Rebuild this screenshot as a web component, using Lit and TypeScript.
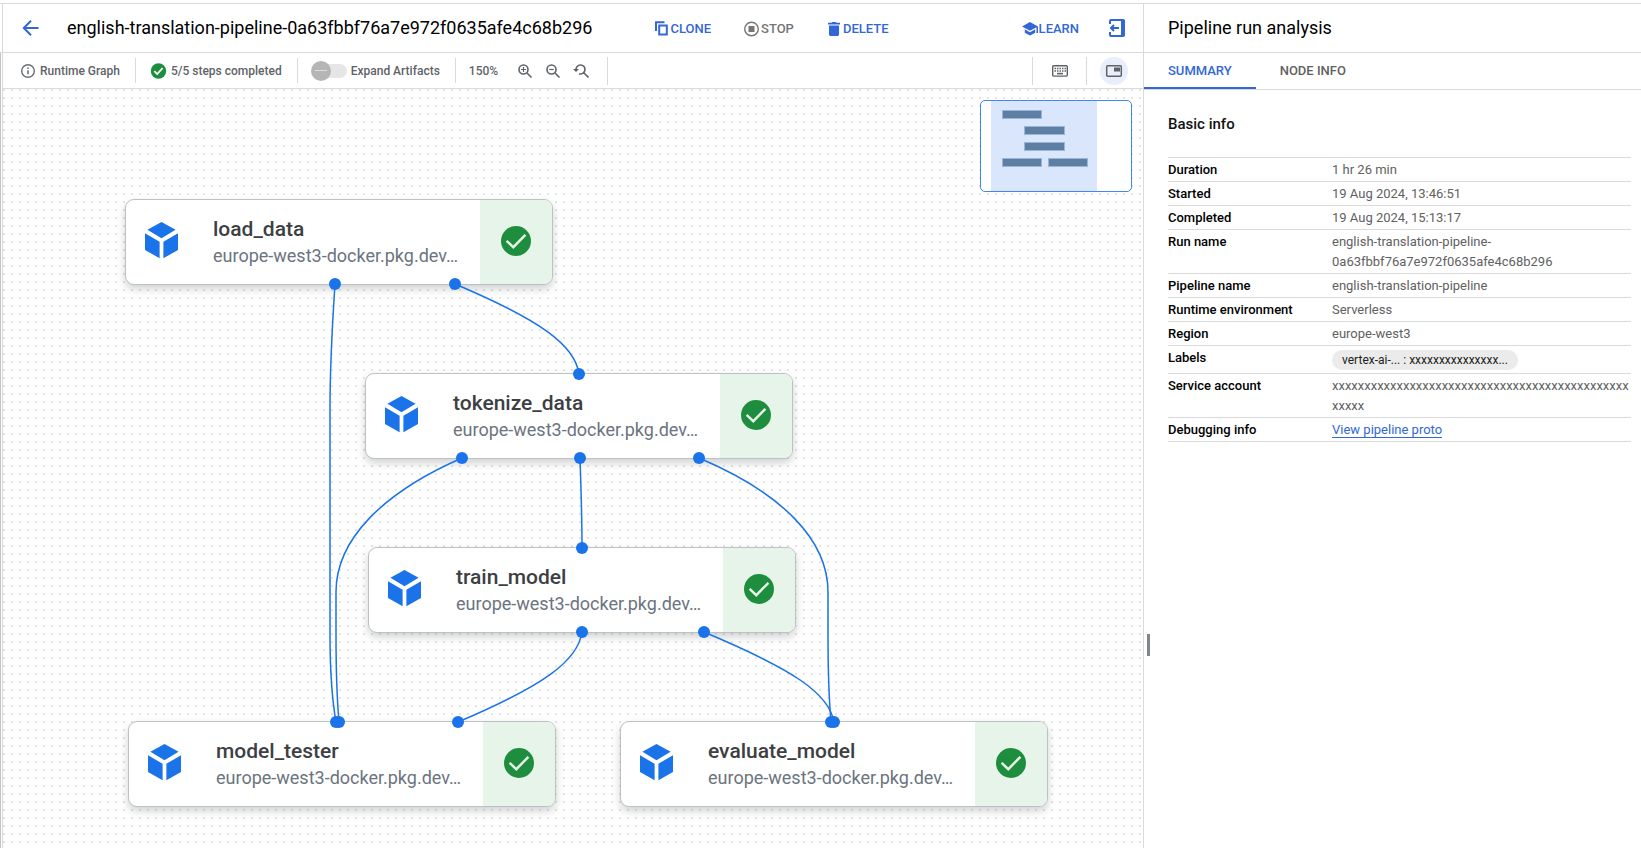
import { LitElement, html, svg, css, nothing } from "lit";
import { customElement, property, state } from "lit/decorators.js";
import { classMap } from "lit/directives/class-map.js";

interface GraphNode {
  name: string;
  image: string;
  x: number;
  y: number;
}

const IMAGE = "europe-west3-docker.pkg.dev…";

const NODES: GraphNode[] = [
  { name: "load_data", image: IMAGE, x: 122, y: 110 },
  { name: "tokenize_data", image: IMAGE, x: 362, y: 284 },
  { name: "train_model", image: IMAGE, x: 365, y: 458 },
  { name: "model_tester", image: IMAGE, x: 125, y: 632 },
  { name: "evaluate_model", image: IMAGE, x: 617, y: 632 },
];

const EDGES = [
  "M332 195C329 240 327 270 327 320V545C327 585 329 610 333 633",
  "M452 195C537 231 572 256 576 285",
  "M459 369C379 404 333 451 333 503V545C333 585 334 610 336 633",
  "M577 369C578 400 579 425 579 459",
  "M696 369C779 404 825 451 825 503V545C825 585 826 610 828 633",
  "M579 543C575 572 540 597 455 633",
  "M701 543C789 580 826 604 831 633",
];

const PORTS = [
  [332, 195], [452, 195], [576, 285], [459, 369], [577, 369], [696, 369],
  [579, 459], [579, 543], [701, 543], [333, 633], [336, 633], [455, 633],
  [828, 633], [831, 633],
];

@customElement("graph-node")
class GraphNodeCard extends LitElement {
  @property() name = "";
  @property() image = "";

  static styles = css`
    :host {
      display: flex;
      box-sizing: border-box;
      width: 428px;
      height: 86px;
      border: 1px solid #bac2c4;
      border-radius: 9px;
      overflow: hidden;
      background: #fff;
      box-shadow: 0 4px 9px rgba(60, 64, 67, 0.24);
    }
    .kind {
      display: flex;
      align-items: center;
      padding: 0 34px 4px 18px;
    }
    .text {
      flex: 1;
      min-width: 0;
      padding-top: 16px;
    }
    .name {
      font-size: 21px;
      line-height: 27px;
      font-weight: 500;
      color: #3c4043;
    }
    .image {
      font-size: 18px;
      line-height: 25px;
      color: #6b7480;
      white-space: nowrap;
    }
    .status {
      display: flex;
      align-items: center;
      justify-content: center;
      width: 72px;
      padding-bottom: 2px;
      box-sizing: border-box;
      background: #e6f4ea;
    }
    svg {
      display: block;
    }
  `;

  render() {
    return html`
      <div class="kind">
        <svg width="35" height="38" viewBox="0 0 35 38" fill="#1a73e8">
          <path d="M17.5 1 31.6 8.8 17.5 17.2 3.4 8.8z" />
          <path d="M1 12.2 15.6 20.8V37.2L1 29z" />
          <path d="M34 12.2 19.4 20.8V37.2L34 29z" />
        </svg>
      </div>
      <div class="text">
        <div class="name">${this.name}</div>
        <div class="image">${this.image}</div>
      </div>
      <div class="status">
        <svg width="30" height="30" viewBox="0 0 30 30" role="img" aria-label="Succeeded">
          <circle cx="15" cy="15" r="15" fill="#1e8e3e" />
          <path d="M5.6 14.8 12.3 21.2 24.4 8.8" fill="none" stroke="#e6f4ea" stroke-width="2.4" />
        </svg>
      </div>
    `;
  }
}

@customElement("app-root")
class AppRoot extends LitElement {
  @state() private tab = "summary";
  @state() private mapShown = true;

  static styles = css`
    :host {
      display: flex;
      box-sizing: border-box;
      height: 100vh;
      padding-top: 3px;
      overflow: hidden;
      background: #fff;
      font-family: Roboto, "Liberation Sans", sans-serif;
      font-size: 13px;
      color: #111;
    }
    button {
      border: 0;
      padding: 0;
      background: none;
      font: inherit;
      color: inherit;
      cursor: pointer;
    }
    svg {
      display: block;
      flex: none;
    }
    .rail {
      flex: none;
      width: 2px;
      display: flex;
      flex-direction: column;
    }
    .rail-head {
      height: 48px;
      border-top: 1px solid #dadada;
      border-bottom: 1px solid #dadada;
    }
    .rail-body {
      flex: 1;
      width: 1px;
      background: #c4c4c6;
    }
    .main {
      flex: 1;
      min-width: 0;
      display: flex;
      flex-direction: column;
      border-left: 1px solid #dadada;
    }
    .header {
      flex: none;
      display: flex;
      align-items: center;
      height: 48px;
      border-top: 1px solid #dadada;
      border-bottom: 1px solid #dadada;
    }
    .main .header {
      padding: 0 18px 0 19px;
    }
    .title {
      margin: 0;
      font-size: 18px;
      line-height: 24px;
      font-weight: 400;
      white-space: nowrap;
      color: #000;
    }
    .back {
      margin-right: 28px;
    }
    .actions {
      display: flex;
      gap: 33px;
      margin-left: 63px;
    }
    .action {
      display: flex;
      align-items: center;
      gap: 2px;
      padding-top: 1px;
      font-weight: 500;
      line-height: 20px;
      color: #3367d6;
    }
    .action:disabled {
      color: #757575;
      cursor: default;
    }
    .tools {
      display: flex;
      align-items: center;
      gap: 30px;
      margin-left: auto;
      color: #3367d6;
    }
    .tools .action {
      gap: 0;
    }
    .toolbar {
      flex: none;
      display: flex;
      align-items: center;
      height: 35px;
      border-bottom: 1px solid #dadada;
      padding: 0 15px 0 17px;
      font-size: 12px;
      font-weight: 500;
      color: #5f6368;
      white-space: nowrap;
    }
    .cell {
      display: flex;
      align-items: center;
      gap: 4px;
      height: 25px;
      border-right: 1px solid #dadada;
      padding-right: 15px;
      margin-right: 13px;
    }
    .cell.tall {
      height: 28px;
      padding-right: 18px;
    }
    .zooms {
      display: flex;
      gap: 12px;
      margin-left: 15px;
    }
    .views {
      display: flex;
      align-items: center;
      margin-left: auto;
    }
    .views .cell.tall {
      border-left: 1px solid #dadada;
      padding: 0 17px 0 18px;
    }
    .map-toggle {
      display: flex;
      align-items: center;
      justify-content: center;
      width: 28px;
      height: 28px;
      border-radius: 50%;
    }
    .map-toggle.on {
      background: #e8eefb;
    }
    .switch {
      appearance: none;
      position: relative;
      flex: none;
      width: 36px;
      height: 20px;
      margin: 0;
    }
    .switch::before {
      content: "";
      position: absolute;
      left: 4px;
      top: 3px;
      width: 32px;
      height: 14px;
      border-radius: 7px;
      background: #e6e6e6;
    }
    .switch::after {
      content: "";
      position: absolute;
      left: 0;
      top: 0;
      width: 20px;
      height: 20px;
      border-radius: 50%;
      background: linear-gradient(#dedede, #dedede) center / 12px 1px no-repeat #b5b5b5;
    }
    .canvas {
      flex: 1;
      min-height: 0;
      position: relative;
      overflow: hidden;
      background: conic-gradient(from 270deg at 2px 2px, #e4e4e4 90deg, transparent 0) 0 0 / 8px 8px;
    }
    .node {
      position: absolute;
    }
    .edges {
      position: absolute;
      inset: 0;
      width: 100%;
      height: 100%;
      pointer-events: none;
    }
    .minimap {
      position: absolute;
      top: 11px;
      right: 11px;
      box-sizing: border-box;
      width: 152px;
      height: 92px;
      border: 1px solid #4285f4;
      border-radius: 5px;
      background: #fff;
      overflow: hidden;
    }
    .panel {
      flex: none;
      position: relative;
      box-sizing: border-box;
      width: 498px;
      border-left: 1px solid #dadada;
      background: #fff;
    }
    .panel .header {
      padding: 0 24px;
    }
    .tabs {
      display: flex;
      height: 36px;
      border-bottom: 1px solid #dadada;
    }
    .tab {
      box-sizing: border-box;
      height: 36px;
      padding: 0 24px;
      border-bottom: 2px solid transparent;
      font-weight: 500;
      color: #616161;
    }
    .tab.on {
      color: #3367d6;
      border-color: #3367d6;
    }
    .info {
      padding: 24px 10px 0 24px;
    }
    .info h2 {
      margin: 0 0 23px;
      font-size: 15px;
      line-height: 20px;
      font-weight: 500;
      color: #111;
    }
    table {
      width: 100%;
      table-layout: fixed;
      border-spacing: 0;
      border-top: 1px solid #dadada;
      line-height: 20px;
    }
    th,
    td {
      padding: 2px 0 1px;
      border-bottom: 1px solid #dadada;
      vertical-align: top;
      text-align: left;
    }
    th {
      width: 164px;
      font-weight: 500;
      color: #000;
    }
    td {
      color: #616161;
      overflow-wrap: anywhere;
    }
    .chip {
      width: fit-content;
      margin: 2px 0;
      padding: 0 10px;
      border-radius: 10px;
      background: #ebebeb;
      font-size: 12px;
      color: #212121;
    }
    .link {
      color: #3367d6;
      text-decoration: none;
      border-bottom: 1px solid #3367d6;
    }
    .grip {
      position: absolute;
      left: 3px;
      bottom: 192px;
      width: 3px;
      height: 22px;
      background: #80868b;
    }
  `;

  private renderHeader() {
    return html`
      <header class="header">
        <button class="back" aria-label="Back">
          <svg width="17" height="16" viewBox="0 0 17 16" fill="none" stroke="#3367d6" stroke-width="2">
            <path d="M16.5 8H2M9 .8 1.8 8 9 15.2" />
          </svg>
        </button>
        <h1 class="title">english-translation-pipeline-0a63fbbf76a7e972f0635afe4c68b296</h1>
        <div class="actions">
          <button class="action">
            <svg width="13" height="15" viewBox="0 0 13 15" fill="none" stroke="#3367d6" stroke-width="2">
              <path d="M1 10V1.2H9.5" />
              <path d="M4.2 4.4H11.8V13.4H4.2z" />
            </svg>
            CLONE
          </button>
          <button class="action" disabled>
            <svg width="15" height="16" viewBox="0 0 15 16">
              <circle cx="7.5" cy="8" r="6.8" fill="none" stroke="#757575" stroke-width="1.4" />
              <path d="M4.5 5h6v6h-6z" fill="#757575" />
            </svg>
            STOP
          </button>
          <button class="action">
            <svg width="14" height="14" viewBox="0 0 14 14" fill="#3367d6">
              <path d="M1 .8h3.4L5.4 0h3.2l1 .8H13v1.7H1zM2 3.6h10v8.6c0 1-.7 1.8-1.7 1.8H3.7C2.7 14 2 13.2 2 12.2z" />
            </svg>
            DELETE
          </button>
        </div>
        <div class="tools">
          <button class="action">
            <svg width="17" height="14" viewBox="0 0 17 14" fill="#3367d6">
              <path d="M8 0 16 4.4V11H14.5V5.3L8 8.8 0 4.4z" />
              <path d="M2.8 7.3 8 10.2l5.2-2.9v3.4L8 13.6l-5.2-2.9z" />
            </svg>
            LEARN
          </button>
          <button aria-label="Hide panel">
            <svg width="16" height="18" viewBox="0 0 16 18" fill="none" stroke="#3367d6" stroke-width="2">
              <path d="M1 5V2q0-1 1-1H14q1 0 1 1V16q0 1-1 1H2q-1 0-1-1V13" />
              <path d="M14 1V17" stroke-width="4" />
              <path d="M10 9H2M5 6 2 9 5 12" />
            </svg>
          </button>
        </div>
      </header>
    `;
  }

  private renderToolbar() {
    const lens = svg`<circle cx="5.5" cy="5.5" r="4.5" /><path d="M9 9 13.5 13.5" />`;
    return html`
      <div class="toolbar">
        <div class="cell">
          <svg width="16" height="16" viewBox="0 0 16 16">
            <circle cx="8" cy="8" r="6.3" fill="none" stroke="#6b6f74" stroke-width="1.4" />
            <path d="M7.2 7.2h1.6v4H7.2zM7.2 4.6h1.6v1.5H7.2z" fill="#6b6f74" />
          </svg>
          Runtime Graph
        </div>
        <div class="cell">
          <svg width="18" height="16" viewBox="0 0 18 16">
            <circle cx="9.5" cy="8" r="7.7" fill="#1e8e3e" />
            <path d="M5.3 8.2 8.2 11 13.6 5.2" fill="none" stroke="#fff" stroke-width="1.7" />
          </svg>
          5/5 steps completed
        </div>
        <label class="cell">
          <input class="switch" type="checkbox" />
          Expand Artifacts
        </label>
        <div class="cell tall">
          150%
          <div class="zooms">
            <button aria-label="Zoom in">
              <svg width="16" height="14" viewBox="-1 0 16 14" fill="none" stroke="#5f6368" stroke-width="1.6">
                ${lens}<path d="M3 5.5H8M5.5 3V8" stroke-width="1.2" />
              </svg>
            </button>
            <button aria-label="Zoom out">
              <svg width="16" height="14" viewBox="-1 0 16 14" fill="none" stroke="#5f6368" stroke-width="1.6">
                ${lens}<path d="M3.2 5.5H7.8" stroke-width="1.2" />
              </svg>
            </button>
            <button aria-label="Reset zoom">
              <svg width="16" height="14" viewBox="-2 0 16 14" fill="none" stroke="#5f6368" stroke-width="1.6">
                <path d="M1 6A4.5 4.5 0 1 1 4 9.7M9 9 13.5 13.5" />
                <path d="M-2 5H4L1 8z" fill="#5f6368" stroke="none" />
              </svg>
            </button>
          </div>
        </div>
        <div class="views">
          <div class="cell tall">
            <button aria-label="Keyboard shortcuts">
              <svg width="18" height="14" viewBox="0 0 18 14" fill="none" stroke="#5f6368">
                <rect x="1.7" y="1.7" width="14.6" height="10.4" rx="1" stroke-width="1.4" />
                <path d="M3.5 4.5H15M3.5 7H15" stroke-width="1.5" stroke-dasharray="1.5 1" />
                <path d="M6 9.6H12" stroke-width="1.6" />
              </svg>
            </button>
          </div>
          <button
            class=${classMap({ "map-toggle": true, on: this.mapShown })}
            aria-label="Minimap"
            aria-pressed=${this.mapShown}
            @click=${() => (this.mapShown = !this.mapShown)}
          >
            <svg width="18" height="14" viewBox="0 0 18 14">
              <rect x="1.7" y="1.7" width="14.6" height="10.6" rx="1" fill="none" stroke="#5f6368" stroke-width="1.5" />
              <path d="M9 3.5h6v4H9z" fill="#5f6368" />
            </svg>
          </button>
        </div>
      </div>
    `;
  }

  private renderCanvas() {
    return html`
      <div class="canvas">
        ${NODES.map(
          (n) => html`<graph-node class="node" style="left:${n.x}px;top:${n.y}px" .name=${n.name} .image=${n.image}></graph-node>`
        )}
        <svg class="edges" aria-hidden="true">
          ${EDGES.map((d) => svg`<path d=${d} fill="none" stroke="#1a73e8" stroke-width="1.5" />`)}
          ${PORTS.map(([x, y]) => svg`<circle cx=${x} cy=${y} r="6" fill="#1a73e8" />`)}
        </svg>
        ${this.mapShown
          ? html`<div class="minimap">
              <svg width="150" height="90" viewBox="0 0 150 90">
                <path d="M10 0H116V90H10z" fill="#d9e6fc" />
                <g fill="#5c7fa3" stroke="#9db6d8" stroke-width="1">
                  <rect x="21.5" y="9.5" width="39" height="8" />
                  <rect x="43.5" y="25.5" width="40" height="8" />
                  <rect x="43.5" y="41.5" width="40" height="8" />
                  <rect x="21.5" y="57.5" width="39" height="8" />
                  <rect x="67.5" y="57.5" width="39" height="8" />
                </g>
              </svg>
            </div>`
          : nothing}
      </div>
    `;
  }

  private renderTab(id: string, label: string) {
    const on = this.tab === id;
    return html`<button
      class=${classMap({ tab: true, on })}
      role="tab"
      aria-selected=${on}
      @click=${() => (this.tab = id)}
    >${label}</button>`;
  }

  private renderPanel() {
    const rows: [string, unknown][] = [
      ["Duration", "1 hr 26 min"],
      ["Started", "19 Aug 2024, 13:46:51"],
      ["Completed", "19 Aug 2024, 15:13:17"],
      ["Run name", "english-translation-pipeline-0a63fbbf76a7e972f0635afe4c68b296"],
      ["Pipeline name", "english-translation-pipeline"],
      ["Runtime environment", "Serverless"],
      ["Region", "europe-west3"],
      ["Labels", html`<div class="chip">vertex-ai-... : xxxxxxxxxxxxxxx...</div>`],
      ["Service account", "x".repeat(51)],
      ["Debugging info", html`<a class="link" href="#proto">View pipeline proto</a>`],
    ];
    return html`
      <aside class="panel">
        <header class="header"><h2 class="title">Pipeline run analysis</h2></header>
        <div class="tabs" role="tablist">
          ${this.renderTab("summary", "SUMMARY")}${this.renderTab("node", "NODE INFO")}
        </div>
        ${this.tab === "summary"
          ? html`<section class="info">
              <h2>Basic info</h2>
              <table>
                <tbody>
                  ${rows.map(([k, v]) => html`<tr><th scope="row">${k}</th><td>${v}</td></tr>`)}
                </tbody>
              </table>
            </section>`
          : nothing}
        <div class="grip"></div>
      </aside>
    `;
  }

  render() {
    return html`
      <div class="rail"><div class="rail-head"></div><div class="rail-body"></div></div>
      <main class="main">${this.renderHeader()} ${this.renderToolbar()} ${this.renderCanvas()}</main>
      ${this.renderPanel()}
    `;
  }
}
